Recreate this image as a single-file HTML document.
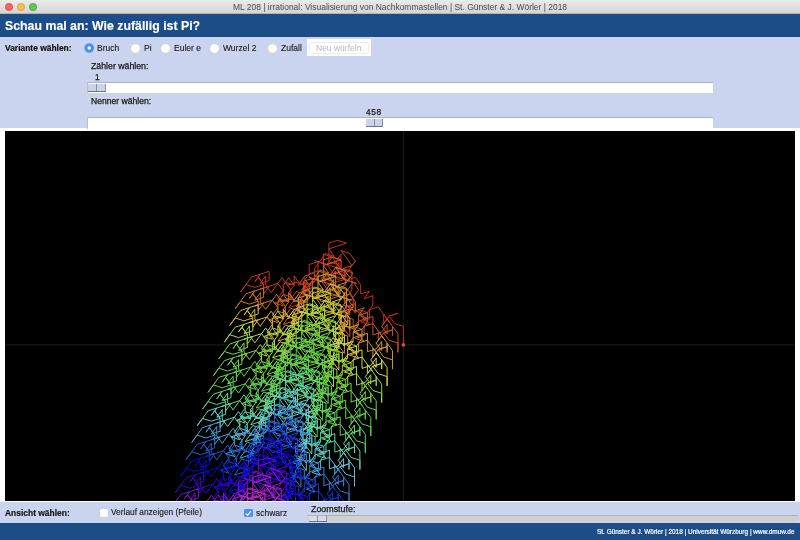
<!DOCTYPE html>
<html><head><meta charset="utf-8"><style>
*{box-sizing:border-box}
html,body{margin:0;padding:0;width:800px;height:540px;overflow:hidden;background:#cad4ee;font-family:"Liberation Sans",sans-serif}
.a{position:absolute;white-space:nowrap;will-change:transform}
#tb{left:0;top:0;width:800px;height:13.5px;background:linear-gradient(#ebebeb,#d5d5d5);border-bottom:0.5px solid #b5b5b5}
.tl{position:absolute;top:3px;width:7.5px;height:7.5px;border-radius:50%}
#hd{left:0;top:13.5px;width:800px;height:23.6px;background:#1c4d86}
#pn{left:0;top:37.1px;width:800px;height:91px;background:#cad4ee}
.t{color:#141414;font-size:8.5px;-webkit-text-stroke:0.1px #141414}
.b{font-weight:bold}
.radio{position:absolute;width:9.5px;height:9.5px;border-radius:50%;background:#fff;box-shadow:0 0 0 0.5px #b8bcc8}
.track{position:absolute;background:#fff;border-top:1px solid #a9b1c4;border-left:1px solid #b9c0d0}
.thumb{position:absolute;background:#cad4ee;border-right:1px solid #8a8f9a;border-bottom:1px solid #6f747e}
.thumb i{position:absolute;left:50%;top:0;bottom:0;width:1px;background:#8a8f9a}
#fr{left:0;top:128px;width:800px;height:374.2px;background:#fff}
#pl{left:5px;top:130.5px;width:790px;height:369.7px;background:#000;overflow:hidden}
#bt{left:0;top:502.2px;width:800px;height:21.1px;background:#cad4ee}
#ft{left:0;top:523.3px;width:800px;height:16.7px;background:#1c4d86}
</style></head><body>
<div class="a" id="tb">
 <div class="tl" style="left:5px;background:#f2665e;border:0.5px solid #dd5048"></div>
 <div class="tl" style="left:17.2px;background:#f6be50;border:0.5px solid #dba33a"></div>
 <div class="tl" style="left:29.4px;background:#5ec656;border:0.5px solid #47ad3e"></div>
 <div class="a" style="left:233px;top:2.2px;font-size:8.46px;color:#4a4a4a">ML 208 | irrational: Visualisierung von Nachkommastellen | St. Günster &amp; J. Wörler | 2018</div>
</div>
<div class="a" id="hd"><div class="a b" style="left:5.3px;top:4.9px;font-size:12.33px;color:#fff;-webkit-text-stroke:0.15px #fff">Schau mal an: Wie zufällig ist Pi?</div></div>
<div class="a" id="pn"></div>
<div class="a t b" style="left:5px;top:42.6px;font-size:8.45px;-webkit-text-stroke:0.2px #141414">Variante wählen:</div>
<svg class="a" style="left:84px;top:43px" width="11" height="11"><circle cx="5.2" cy="5" r="4.8" fill="#4b92ee"/><circle cx="5.2" cy="5" r="1.7" fill="#fff"/></svg>
<div class="a t" style="left:97.4px;top:43px">Bruch</div>
<svg class="a" style="left:130.0px;top:42.5px" width="11" height="11"><circle cx="5.5" cy="5.5" r="4.75" fill="#fff" stroke="#c3c8d4" stroke-width="0.5"/></svg>
<div class="a t" style="left:144px;top:43px">Pi</div>
<svg class="a" style="left:160.0px;top:42.5px" width="11" height="11"><circle cx="5.5" cy="5.5" r="4.75" fill="#fff" stroke="#c3c8d4" stroke-width="0.5"/></svg>
<div class="a t" style="left:173.7px;top:43px">Euler e</div>
<svg class="a" style="left:209.1px;top:42.5px" width="11" height="11"><circle cx="5.5" cy="5.5" r="4.75" fill="#fff" stroke="#c3c8d4" stroke-width="0.5"/></svg>
<div class="a t" style="left:222.8px;top:43px">Wurzel 2</div>
<svg class="a" style="left:266.5px;top:42.5px" width="11" height="11"><circle cx="5.5" cy="5.5" r="4.75" fill="#fff" stroke="#c3c8d4" stroke-width="0.5"/></svg>
<div class="a t" style="left:280.6px;top:43px">Zufall</div>
<div class="a" style="left:307px;top:39.2px;width:64px;height:16.6px;background:#fff"></div>
<div class="a" style="left:308.8px;top:42.1px;width:60.4px;height:12.3px;border:0.5px solid #ededed;border-radius:2px"></div>
<div class="a" style="left:315.8px;top:43.4px;font-size:8.5px;color:#b9b9b9">Neu würfeln</div>

<div class="a t" style="left:90.8px;top:61.2px;font-size:8.75px;-webkit-text-stroke:0.25px #141414">Zähler wählen:</div>
<div class="a t" style="left:94.6px;top:71.8px;font-size:8.4px;-webkit-text-stroke:0.25px #1a1a1a">1</div>
<div class="track" style="left:86.7px;top:82.3px;width:626.5px;height:10.5px"></div>
<div class="thumb" style="left:88.3px;top:83.6px;width:17.4px;height:8.4px"><i></i></div>

<div class="a t" style="left:90.8px;top:96.2px;font-size:8.6px;-webkit-text-stroke:0.25px #141414">Nenner wählen:</div>
<div class="a t" style="left:366.1px;top:106.6px;font-size:8.4px;letter-spacing:0.6px;-webkit-text-stroke:0.25px #1a1a1a">458</div>

<div class="a" id="fr"></div>
<div class="track" style="left:86.7px;top:117.3px;width:626.5px;height:11.5px"></div>
<div class="thumb" style="left:366.1px;top:119.3px;width:16.8px;height:7.5px"><i></i></div>
<div class="a" id="pl">
<svg width="790" height="370" style="position:absolute;left:0;top:0">
<line x1="398.4" y1="0" x2="398.4" y2="370" stroke="#19191c" stroke-width="1.2"/>
<line x1="0" y1="213.9" x2="790" y2="213.9" stroke="#19191c" stroke-width="1.2"/>
<g fill="none" stroke-width="1.0" stroke-linejoin="round" stroke-linecap="round"><path d="M398.4 213.9 398.4 204.6 398.4 195.4 389.6 192.5 384.2 185.1 393.0 182.2 384.2 185.1 378.7 192.5 378.7 183.3 384.2 190.8 378.7 183.3" stroke="#c42b1d"/><path d="M378.7 183.3 373.3 175.8 364.5 178.7 364.5 187.9 355.7 190.8 364.5 193.6 359.1 186.2 353.6 178.7 362.4 181.5 367.9 174.0 367.9 164.8" stroke="#c42c1d"/><path d="M367.9 164.8 359.1 167.7 364.5 160.2 355.7 163.0 355.7 153.8 350.3 146.3 341.5 149.2 336.0 141.7 336.0 132.4 336.0 123.2 330.6 130.7" stroke="#c42c1d"/><path d="M330.6 130.7 321.8 133.5 327.2 141.0 332.7 148.5 341.5 145.6 336.0 138.1 327.2 135.3 318.4 132.4 309.6 129.6 318.4 132.4 318.4 123.2" stroke="#c42d1e"/><path d="M318.4 123.2 327.2 126.0 321.8 133.5 313.0 130.7 304.2 133.5 304.2 142.8 313.0 139.9 313.0 130.7 321.8 133.5 330.6 130.7 336.0 138.1" stroke="#c42e1e"/><path d="M336.0 138.1 336.0 128.9 327.2 126.0 332.7 133.5 323.9 130.7 323.9 121.4 323.9 112.2 332.7 109.3 341.5 112.2 332.7 115.0 323.9 117.9" stroke="#c42f1e"/><path d="M323.9 117.9 329.3 125.4 320.5 122.5 315.1 130.0 309.6 137.5 309.6 146.7 304.2 154.2 298.8 146.7 293.3 154.2 302.1 151.3 296.7 158.8" stroke="#c4301e"/><path d="M296.7 158.8 305.5 161.7 300.0 154.2 305.5 161.7 300.0 154.2 300.0 163.4 308.8 166.3 300.0 163.4 300.0 154.2 300.0 163.4 291.2 160.6" stroke="#c4321e"/><path d="M291.2 160.6 285.8 168.1 285.8 158.8 280.4 151.3 289.2 154.2 283.7 161.7 289.2 169.2 298.0 172.0 289.2 169.2 283.7 176.6 292.5 173.8" stroke="#c4331e"/><path d="M292.5 173.8 298.0 166.3 298.0 157.1 306.8 154.2 298.0 151.3 303.4 143.9 308.8 151.3 314.3 143.9 308.8 151.3 300.0 154.2 291.2 151.3" stroke="#c4351e"/><path d="M291.2 151.3 282.4 154.2 277.0 146.7 271.6 154.2 266.1 161.7 260.7 154.2 260.7 144.9 255.3 152.4 264.1 149.6 264.1 140.3 255.3 143.2" stroke="#c4371f"/><path d="M255.3 143.2 249.8 150.7 255.3 143.2 246.5 146.0 241.0 153.5 235.6 161.0 241.0 153.5 249.8 156.4 258.6 153.5 253.2 146.0 258.6 153.5" stroke="#c5381f"/><path d="M258.6 153.5 258.6 162.8 264.1 155.3 255.3 158.1 264.1 155.3 272.9 152.4 278.3 159.9 272.9 167.4 278.3 174.9 269.5 172.0 278.3 169.2" stroke="#c53a1f"/><path d="M278.3 169.2 287.1 166.3 278.3 163.4 278.3 154.2 283.7 146.7 289.2 154.2 289.2 144.9 294.6 152.4 300.0 144.9 308.8 142.1 314.3 149.6" stroke="#c53d20"/><path d="M314.3 149.6 323.1 146.7 328.5 139.2 333.9 131.7 333.9 141.0 339.4 148.5 330.6 151.3 321.8 154.2 316.4 146.7 325.2 143.9 333.9 146.7" stroke="#c53f20"/><path d="M333.9 146.7 342.7 149.6 351.5 152.4 342.7 149.6 348.2 142.1 339.4 139.2 339.4 148.5 348.2 151.3 353.6 158.8 348.2 166.3 342.7 158.8" stroke="#c54120"/><path d="M342.7 158.8 348.2 151.3 339.4 148.5 333.9 141.0 325.2 143.9 330.6 136.4 339.4 139.2 330.6 142.1 339.4 144.9 344.8 137.5 350.3 130.0" stroke="#c54321"/><path d="M350.3 130.0 344.8 122.5 336.0 119.6 341.5 127.1 346.9 134.6 338.1 137.5 346.9 140.3 346.9 149.6 346.9 158.8 341.5 166.3 341.5 175.6" stroke="#c54621"/><path d="M341.5 175.6 350.3 172.7 350.3 181.9 344.8 174.5 344.8 183.7 336.0 180.9 344.8 178.0 336.0 180.9 344.8 178.0 339.4 185.5 330.6 182.6" stroke="#c54821"/><path d="M330.6 182.6 339.4 185.5 344.8 178.0 339.4 185.5 348.2 188.3 348.2 197.6 353.6 190.1 362.4 187.2 353.6 184.4 353.6 193.6 344.8 196.5" stroke="#c54a22"/><path d="M344.8 196.5 336.0 193.6 344.8 196.5 344.8 205.7 339.4 198.3 339.4 189.0 344.8 181.5 339.4 174.0 348.2 176.9 348.2 167.7 339.4 170.5" stroke="#c54d22"/><path d="M339.4 170.5 339.4 161.3 339.4 170.5 344.8 178.0 353.6 180.9 359.1 188.3 367.9 185.5 367.9 194.7 367.9 204.0 376.7 201.1 382.1 193.6" stroke="#c65023"/><path d="M382.1 193.6 382.1 202.9 376.7 195.4 382.1 187.9 387.5 195.4 387.5 204.7 387.5 195.4 393.0 202.9 393.0 212.1 393.0 221.4 393.0 212.1" stroke="#c65223"/><path d="M393.0 212.1 384.2 209.3 378.7 201.8 387.5 198.9 378.7 201.8 373.3 209.3 373.3 200.0 378.7 207.5 373.3 200.0 367.9 192.5 359.1 195.4" stroke="#c65524"/><path d="M359.1 195.4 359.1 204.7 350.3 207.5 359.1 210.4 353.6 202.9 348.2 195.4 357.0 198.3 362.4 190.8 362.4 181.5 353.6 184.4 359.1 176.9" stroke="#c65824"/><path d="M359.1 176.9 350.3 179.8 350.3 170.5 344.8 163.0 336.0 165.9 330.6 158.4 330.6 149.2 330.6 139.9 325.2 147.4 316.4 150.2 321.8 157.7" stroke="#c65a25"/><path d="M321.8 157.7 327.2 165.2 336.0 162.4 330.6 154.9 321.8 152.0 313.0 149.2 304.2 146.3 313.0 149.2 313.0 139.9 321.8 142.8 316.4 150.2" stroke="#c65d26"/><path d="M316.4 150.2 307.6 147.4 298.8 150.2 298.8 159.5 307.6 156.6 307.6 147.4 316.4 150.2 325.2 147.4 330.6 154.9 330.6 145.6 321.8 142.8" stroke="#c76026"/><path d="M321.8 142.8 327.2 150.2 318.4 147.4 318.4 138.1 318.4 128.9 327.2 126.0 336.0 128.9 327.2 131.7 318.4 134.6 323.9 142.1 315.1 139.2" stroke="#c76327"/><path d="M315.1 139.2 309.6 146.7 304.2 154.2 304.2 163.4 298.8 170.9 293.3 163.4 287.9 170.9 296.7 168.1 291.2 175.6 300.0 178.4 294.6 170.9" stroke="#c76527"/><path d="M294.6 170.9 300.0 178.4 294.6 170.9 294.6 180.2 303.4 183.0 294.6 180.2 294.6 170.9 294.6 180.2 285.8 177.3 280.4 184.8 280.4 175.6" stroke="#c76828"/><path d="M280.4 175.6 274.9 168.1 283.7 170.9 278.3 178.4 283.7 185.9 292.5 188.8 283.7 185.9 278.3 193.4 287.1 190.5 292.5 183.0 292.5 173.8" stroke="#c86b29"/><path d="M292.5 173.8 301.3 170.9 292.5 168.1 298.0 160.6 303.4 168.1 308.8 160.6 303.4 168.1 294.6 170.9 285.8 168.1 277.0 170.9 271.6 163.4" stroke="#c86e29"/><path d="M271.6 163.4 266.1 170.9 260.7 178.4 255.3 170.9 255.3 161.7 249.8 169.2 258.6 166.3 258.6 157.1 249.8 159.9 244.4 167.4 249.8 159.9" stroke="#c8712a"/><path d="M249.8 159.9 241.0 162.8 235.6 170.3 230.2 177.7 235.6 170.3 244.4 173.1 253.2 170.3 247.8 162.8 253.2 170.3 253.2 179.5 258.6 172.0" stroke="#c8742b"/><path d="M258.6 172.0 249.8 174.9 258.6 172.0 267.4 169.2 272.9 176.6 267.4 184.1 272.9 191.6 264.1 188.8 272.9 185.9 281.7 183.0 272.9 180.2" stroke="#c9772c"/><path d="M272.9 180.2 272.9 170.9 278.3 163.4 283.7 170.9 283.7 161.7 289.2 169.2 294.6 161.7 303.4 158.8 308.8 166.3 317.6 163.4 323.1 156.0" stroke="#c97a2c"/><path d="M323.1 156.0 328.5 148.5 328.5 157.7 333.9 165.2 325.2 168.1 316.4 170.9 310.9 163.4 319.7 160.6 328.5 163.4 337.3 166.3 346.1 169.2" stroke="#c97d2d"/><path d="M346.1 169.2 337.3 166.3 342.7 158.8 333.9 156.0 333.9 165.2 342.7 168.1 348.2 175.6 342.7 183.0 337.3 175.6 342.7 168.1 333.9 165.2" stroke="#c9802e"/><path d="M333.9 165.2 328.5 157.7 319.7 160.6 325.2 153.1 333.9 156.0 325.2 158.8 333.9 161.7 339.4 154.2 344.8 146.7 339.4 139.2 330.6 136.4" stroke="#ca832f"/><path d="M330.6 136.4 336.0 143.9 341.5 151.3 332.7 154.2 341.5 157.1 341.5 166.3 341.5 175.6 336.0 183.0 336.0 192.3 344.8 189.4 344.8 198.7" stroke="#ca862f"/><path d="M344.8 198.7 339.4 191.2 339.4 200.4 330.6 197.6 339.4 194.7 330.6 197.6 339.4 194.7 333.9 202.2 325.2 199.4 333.9 202.2 339.4 194.7" stroke="#ca8930"/><path d="M339.4 194.7 333.9 202.2 342.7 205.1 342.7 214.3 348.2 206.8 357.0 204.0 348.2 201.1 348.2 210.4 339.4 213.2 330.6 210.4 339.4 213.2" stroke="#cb8c31"/><path d="M339.4 213.2 339.4 222.5 333.9 215.0 333.9 205.7 339.4 198.3 333.9 190.8 342.7 193.6 342.7 184.4 333.9 187.2 333.9 178.0 333.9 187.2" stroke="#cb8f32"/><path d="M333.9 187.2 339.4 194.7 348.2 197.6 353.6 205.1 362.4 202.2 362.4 211.5 362.4 220.7 371.2 217.9 376.7 210.4 376.7 219.6 371.2 212.1" stroke="#cb9233"/><path d="M371.2 212.1 376.7 204.7 382.1 212.1 382.1 221.4 382.1 212.1 387.5 219.6 387.5 228.9 387.5 238.1 387.5 228.9 378.7 226.0 373.3 218.5" stroke="#cc9533"/><path d="M373.3 218.5 382.1 215.7 373.3 218.5 367.9 226.0 367.9 216.8 373.3 224.2 367.9 216.8 362.4 209.3 353.6 212.1 353.6 221.4 344.8 224.2" stroke="#cc9834"/><path d="M344.8 224.2 353.6 227.1 348.2 219.6 342.7 212.1 351.5 215.0 357.0 207.5 357.0 198.3 348.2 201.1 353.6 193.6 344.8 196.5 344.8 187.2" stroke="#cd9b35"/><path d="M344.8 187.2 339.4 179.8 330.6 182.6 325.2 175.1 325.2 165.9 325.2 156.6 319.7 164.1 310.9 167.0 316.4 174.5 321.8 181.9 330.6 179.1" stroke="#cd9e36"/><path d="M330.6 179.1 325.2 171.6 316.4 168.7 307.6 165.9 298.8 163.0 307.6 165.9 307.6 156.6 316.4 159.5 310.9 167.0 302.1 164.1 293.3 167.0" stroke="#cda137"/><path d="M293.3 167.0 293.3 176.2 302.1 173.4 302.1 164.1 310.9 167.0 319.7 164.1 325.2 171.6 325.2 162.4 316.4 159.5 321.8 167.0 313.0 164.1" stroke="#cea438"/><path d="M313.0 164.1 313.0 154.9 313.0 145.6 321.8 142.8 330.6 145.6 321.8 148.5 313.0 151.3 318.4 158.8 309.6 156.0 304.2 163.4 298.8 170.9" stroke="#cea738"/><path d="M298.8 170.9 298.8 180.2 293.3 187.7 287.9 180.2 282.4 187.7 291.2 184.8 285.8 192.3 294.6 195.1 289.2 187.7 294.6 195.1 289.2 187.7" stroke="#cfaa39"/><path d="M289.2 187.7 289.2 196.9 298.0 199.8 289.2 196.9 289.2 187.7 289.2 196.9 280.4 194.1 274.9 201.5 274.9 192.3 269.5 184.8 278.3 187.7" stroke="#cfad3a"/><path d="M278.3 187.7 272.9 195.1 278.3 202.6 287.1 205.5 278.3 202.6 272.9 210.1 281.7 207.3 287.1 199.8 287.1 190.5 295.9 187.7 287.1 184.8" stroke="#cfb03b"/><path d="M287.1 184.8 292.5 177.3 298.0 184.8 303.4 177.3 298.0 184.8 289.2 187.7 280.4 184.8 271.6 187.7 266.1 180.2 260.7 187.7 255.3 195.1" stroke="#d0b33c"/><path d="M255.3 195.1 249.8 187.7 249.8 178.4 244.4 185.9 253.2 183.0 253.2 173.8 244.4 176.6 239.0 184.1 244.4 176.6 235.6 179.5 230.2 187.0" stroke="#d0b63d"/><path d="M230.2 187.0 224.7 194.5 230.2 187.0 239.0 189.8 247.8 187.0 242.3 179.5 247.8 187.0 247.8 196.2 253.2 188.8 244.4 191.6 253.2 188.8" stroke="#d1b93e"/><path d="M253.2 188.8 262.0 185.9 267.4 193.4 262.0 200.9 267.4 208.3 258.6 205.5 267.4 202.6 276.2 199.8 267.4 196.9 267.4 187.7 272.9 180.2" stroke="#d1bc3f"/><path d="M272.9 180.2 278.3 187.7 278.3 178.4 283.7 185.9 289.2 178.4 298.0 175.6 303.4 183.0 312.2 180.2 317.6 172.7 323.1 165.2 323.1 174.5" stroke="#d2c040"/><path d="M323.1 174.5 328.5 181.9 319.7 184.8 310.9 187.7 305.5 180.2 314.3 177.3 323.1 180.2 331.9 183.0 340.7 185.9 331.9 183.0 337.3 175.6" stroke="#d2c341"/><path d="M337.3 175.6 328.5 172.7 328.5 181.9 337.3 184.8 342.7 192.3 337.3 199.8 331.9 192.3 337.3 184.8 328.5 181.9 323.1 174.5 314.3 177.3" stroke="#d3c642"/><path d="M314.3 177.3 319.7 169.8 328.5 172.7 319.7 175.6 328.5 178.4 333.9 170.9 339.4 163.4 333.9 156.0 325.2 153.1 330.6 160.6 336.0 168.1" stroke="#d3c942"/><path d="M336.0 168.1 327.2 170.9 336.0 173.8 336.0 183.0 336.0 192.3 330.6 199.8 330.6 209.0 339.4 206.2 339.4 215.4 333.9 207.9 333.9 217.2" stroke="#d4cc43"/><path d="M333.9 217.2 325.2 214.3 333.9 211.5 325.2 214.3 333.9 211.5 328.5 218.9 319.7 216.1 328.5 218.9 333.9 211.5 328.5 218.9 337.3 221.8" stroke="#d4cf44"/><path d="M337.3 221.8 337.3 231.1 342.7 223.6 351.5 220.7 342.7 217.9 342.7 227.1 333.9 230.0 325.2 227.1 333.9 230.0 333.9 239.2 328.5 231.7" stroke="#d5d245"/><path d="M328.5 231.7 328.5 222.5 333.9 215.0 328.5 207.5 337.3 210.4 337.3 201.1 328.5 204.0 328.5 194.7 328.5 204.0 333.9 211.5 342.7 214.3" stroke="#d6d546"/><path d="M342.7 214.3 348.2 221.8 357.0 218.9 357.0 228.2 357.0 237.4 365.8 234.6 371.2 227.1 371.2 236.4 365.8 228.9 371.2 221.4 376.7 228.9" stroke="#d3d646"/><path d="M376.7 228.9 376.7 238.1 376.7 228.9 382.1 236.4 382.1 245.6 382.1 254.9 382.1 245.6 373.3 242.7 367.9 235.3 376.7 232.4 367.9 235.3" stroke="#d1d646"/><path d="M367.9 235.3 362.4 242.7 362.4 233.5 367.9 241.0 362.4 233.5 357.0 226.0 348.2 228.9 348.2 238.1 339.4 241.0 348.2 243.8 342.7 236.4" stroke="#ced546"/><path d="M342.7 236.4 337.3 228.9 346.1 231.7 351.5 224.2 351.5 215.0 342.7 217.9 348.2 210.4 339.4 213.2 339.4 204.0 333.9 196.5 325.2 199.4" stroke="#ccd546"/><path d="M325.2 199.4 319.7 191.9 319.7 182.6 319.7 173.4 314.3 180.9 305.5 183.7 310.9 191.2 316.4 198.7 325.2 195.8 319.7 188.3 310.9 185.5" stroke="#c9d545"/><path d="M310.9 185.5 302.1 182.6 293.3 179.8 302.1 182.6 302.1 173.4 310.9 176.2 305.5 183.7 296.7 180.9 287.9 183.7 287.9 193.0 296.7 190.1" stroke="#c6d545"/><path d="M296.7 190.1 296.7 180.9 305.5 183.7 314.3 180.9 319.7 188.3 319.7 179.1 310.9 176.2 316.4 183.7 307.6 180.9 307.6 171.6 307.6 162.4" stroke="#c4d545"/><path d="M307.6 162.4 316.4 159.5 325.2 162.4 316.4 165.2 307.6 168.1 313.0 175.6 304.2 172.7 298.8 180.2 293.3 187.7 293.3 196.9 287.9 204.4" stroke="#c1d545"/><path d="M287.9 204.4 282.4 196.9 277.0 204.4 285.8 201.5 280.4 209.0 289.2 211.9 283.7 204.4 289.2 211.9 283.7 204.4 283.7 213.6 292.5 216.5" stroke="#bfd545"/><path d="M292.5 216.5 283.7 213.6 283.7 204.4 283.7 213.6 274.9 210.8 269.5 218.3 269.5 209.0 264.1 201.5 272.9 204.4 267.4 211.9 272.9 219.4" stroke="#bcd544"/><path d="M272.9 219.4 281.7 222.2 272.9 219.4 267.4 226.8 276.2 224.0 281.7 216.5 281.7 207.3 290.5 204.4 281.7 201.5 287.1 194.1 292.5 201.5" stroke="#bad544"/><path d="M292.5 201.5 298.0 194.1 292.5 201.5 283.7 204.4 274.9 201.5 266.1 204.4 260.7 196.9 255.3 204.4 249.8 211.9 244.4 204.4 244.4 195.1" stroke="#b7d544"/><path d="M244.4 195.1 239.0 202.6 247.8 199.8 247.8 190.5 239.0 193.4 233.5 200.9 239.0 193.4 230.2 196.2 224.7 203.7 219.3 211.2 224.7 203.7" stroke="#b5d544"/><path d="M224.7 203.7 233.5 206.6 242.3 203.7 236.9 196.2 242.3 203.7 242.3 213.0 247.8 205.5 239.0 208.3 247.8 205.5 256.5 202.6 262.0 210.1" stroke="#b2d444"/><path d="M262.0 210.1 256.5 217.6 262.0 225.1 253.2 222.2 262.0 219.4 270.8 216.5 262.0 213.6 262.0 204.4 267.4 196.9 272.9 204.4 272.9 195.1" stroke="#b0d443"/><path d="M272.9 195.1 278.3 202.6 283.7 195.1 292.5 192.3 298.0 199.8 306.8 196.9 312.2 189.4 317.6 181.9 317.6 191.2 323.1 198.7 314.3 201.5" stroke="#add443"/><path d="M314.3 201.5 305.5 204.4 300.0 196.9 308.8 194.1 317.6 196.9 326.4 199.8 335.2 202.6 326.4 199.8 331.9 192.3 323.1 189.4 323.1 198.7" stroke="#abd443"/><path d="M323.1 198.7 331.9 201.5 337.3 209.0 331.9 216.5 326.4 209.0 331.9 201.5 323.1 198.7 317.6 191.2 308.8 194.1 314.3 186.6 323.1 189.4" stroke="#a8d443"/><path d="M323.1 189.4 314.3 192.3 323.1 195.1 328.5 187.7 333.9 180.2 328.5 172.7 319.7 169.8 325.2 177.3 330.6 184.8 321.8 187.7 330.6 190.5" stroke="#a6d443"/><path d="M330.6 190.5 330.6 199.8 330.6 209.0 325.2 216.5 325.2 225.8 333.9 222.9 333.9 232.1 328.5 224.7 328.5 233.9 319.7 231.1 328.5 228.2" stroke="#a4d443"/><path d="M328.5 228.2 319.7 231.1 328.5 228.2 323.1 235.7 314.3 232.8 323.1 235.7 328.5 228.2 323.1 235.7 331.9 238.5 331.9 247.8 337.3 240.3" stroke="#a1d443"/><path d="M337.3 240.3 346.1 237.4 337.3 234.6 337.3 243.8 328.5 246.7 319.7 243.8 328.5 246.7 328.5 255.9 323.1 248.5 323.1 239.2 328.5 231.7" stroke="#9fd442"/><path d="M328.5 231.7 323.1 224.2 331.9 227.1 331.9 217.9 323.1 220.7 323.1 211.5 323.1 220.7 328.5 228.2 337.3 231.1 342.7 238.5 351.5 235.7" stroke="#9dd442"/><path d="M351.5 235.7 351.5 244.9 351.5 254.2 360.3 251.3 365.8 243.8 365.8 253.1 360.3 245.6 365.8 238.1 371.2 245.6 371.2 254.9 371.2 245.6" stroke="#9ad442"/><path d="M371.2 245.6 376.7 253.1 376.7 262.3 376.7 271.6 376.7 262.3 367.9 259.5 362.4 252.0 371.2 249.1 362.4 252.0 357.0 259.5 357.0 250.2" stroke="#98d442"/><path d="M357.0 250.2 362.4 257.7 357.0 250.2 351.5 242.7 342.7 245.6 342.7 254.9 333.9 257.7 342.7 260.6 337.3 253.1 331.9 245.6 340.7 248.5" stroke="#96d442"/><path d="M340.7 248.5 346.1 241.0 346.1 231.7 337.3 234.6 342.7 227.1 333.9 230.0 333.9 220.7 328.5 213.2 319.7 216.1 314.3 208.6 314.3 199.4" stroke="#94d442"/><path d="M314.3 199.4 314.3 190.1 308.8 197.6 300.0 200.4 305.5 207.9 310.9 215.4 319.7 212.6 314.3 205.1 305.5 202.2 296.7 199.4 287.9 196.5" stroke="#92d442"/><path d="M287.9 196.5 296.7 199.4 296.7 190.1 305.5 193.0 300.0 200.4 291.2 197.6 282.4 200.4 282.4 209.7 291.2 206.8 291.2 197.6 300.0 200.4" stroke="#8fd341"/><path d="M300.0 200.4 308.8 197.6 314.3 205.1 314.3 195.8 305.5 193.0 310.9 200.4 302.1 197.6 302.1 188.3 302.1 179.1 310.9 176.2 319.7 179.1" stroke="#8dd341"/><path d="M319.7 179.1 310.9 181.9 302.1 184.8 307.6 192.3 298.8 189.4 293.3 196.9 287.9 204.4 287.9 213.6 282.4 221.1 277.0 213.6 271.6 221.1" stroke="#8bd341"/><path d="M271.6 221.1 280.4 218.3 274.9 225.8 283.7 228.6 278.3 221.1 283.7 228.6 278.3 221.1 278.3 230.4 287.1 233.2 278.3 230.4 278.3 221.1" stroke="#89d341"/><path d="M278.3 221.1 278.3 230.4 269.5 227.5 264.1 235.0 264.1 225.8 258.6 218.3 267.4 221.1 262.0 228.6 267.4 236.1 276.2 239.0 267.4 236.1" stroke="#87d341"/><path d="M267.4 236.1 262.0 243.6 270.8 240.7 276.2 233.2 276.2 224.0 285.0 221.1 276.2 218.3 281.7 210.8 287.1 218.3 292.5 210.8 287.1 218.3" stroke="#85d341"/><path d="M287.1 218.3 278.3 221.1 269.5 218.3 260.7 221.1 255.3 213.6 249.8 221.1 244.4 228.6 239.0 221.1 239.0 211.9 233.5 219.4 242.3 216.5" stroke="#83d341"/><path d="M242.3 216.5 242.3 207.3 233.5 210.1 228.1 217.6 233.5 210.1 224.7 213.0 219.3 220.5 213.8 227.9 219.3 220.5 228.1 223.3 236.9 220.5" stroke="#81d341"/><path d="M236.9 220.5 231.4 213.0 236.9 220.5 236.9 229.7 242.3 222.2 233.5 225.1 242.3 222.2 251.1 219.4 256.5 226.8 251.1 234.3 256.5 241.8" stroke="#80d341"/><path d="M256.5 241.8 247.8 239.0 256.5 236.1 265.3 233.2 256.5 230.4 256.5 221.1 262.0 213.6 267.4 221.1 267.4 211.9 272.9 219.4 278.3 211.9" stroke="#7ed341"/><path d="M278.3 211.9 287.1 209.0 292.5 216.5 301.3 213.6 306.8 206.2 312.2 198.7 312.2 207.9 317.6 215.4 308.8 218.3 300.0 221.1 294.6 213.6" stroke="#7cd340"/><path d="M294.6 213.6 303.4 210.8 312.2 213.6 321.0 216.5 329.8 219.4 321.0 216.5 326.4 209.0 317.6 206.2 317.6 215.4 326.4 218.3 331.9 225.8" stroke="#7ad340"/><path d="M331.9 225.8 326.4 233.2 321.0 225.8 326.4 218.3 317.6 215.4 312.2 207.9 303.4 210.8 308.8 203.3 317.6 206.2 308.8 209.0 317.6 211.9" stroke="#79d340"/><path d="M317.6 211.9 323.1 204.4 328.5 196.9 323.1 189.4 314.3 186.6 319.7 194.1 325.2 201.5 316.4 204.4 325.2 207.3 325.2 216.5 325.2 225.8" stroke="#77d340"/><path d="M325.2 225.8 319.7 233.2 319.7 242.5 328.5 239.6 328.5 248.9 323.1 241.4 323.1 250.6 314.3 247.8 323.1 244.9 314.3 247.8 323.1 244.9" stroke="#75d340"/><path d="M323.1 244.9 317.6 252.4 308.8 249.6 317.6 252.4 323.1 244.9 317.6 252.4 326.4 255.3 326.4 264.5 331.9 257.0 340.7 254.2 331.9 251.3" stroke="#74d340"/><path d="M331.9 251.3 331.9 260.6 323.1 263.4 314.3 260.6 323.1 263.4 323.1 272.7 317.6 265.2 317.6 255.9 323.1 248.5 317.6 241.0 326.4 243.8" stroke="#72d340"/><path d="M326.4 243.8 326.4 234.6 317.6 237.4 317.6 228.2 317.6 237.4 323.1 244.9 331.9 247.8 337.3 255.3 346.1 252.4 346.1 261.7 346.1 270.9" stroke="#71d340"/><path d="M346.1 270.9 354.9 268.1 360.3 260.6 360.3 269.8 354.9 262.3 360.3 254.9 365.8 262.3 365.8 271.6 365.8 262.3 371.2 269.8 371.2 279.1" stroke="#70d340"/><path d="M371.2 279.1 371.2 288.3 371.2 279.1 362.4 276.2 357.0 268.7 365.8 265.9 357.0 268.7 351.5 276.2 351.5 267.0 357.0 274.4 351.5 267.0" stroke="#6ed340"/><path d="M351.5 267.0 346.1 259.5 337.3 262.3 337.3 271.6 328.5 274.4 337.3 277.3 331.9 269.8 326.4 262.3 335.2 265.2 340.7 257.7 340.7 248.5" stroke="#6dd340"/><path d="M340.7 248.5 331.9 251.3 337.3 243.8 328.5 246.7 328.5 237.4 323.1 230.0 314.3 232.8 308.8 225.3 308.8 216.1 308.8 206.8 303.4 214.3" stroke="#6cd340"/><path d="M303.4 214.3 294.6 217.2 300.0 224.7 305.5 232.1 314.3 229.3 308.8 221.8 300.0 218.9 291.2 216.1 282.4 213.2 291.2 216.1 291.2 206.8" stroke="#6bd340"/><path d="M291.2 206.8 300.0 209.7 294.6 217.2 285.8 214.3 277.0 217.2 277.0 226.4 285.8 223.6 285.8 214.3 294.6 217.2 303.4 214.3 308.8 221.8" stroke="#6ad340"/><path d="M308.8 221.8 308.8 212.6 300.0 209.7 305.5 217.2 296.7 214.3 296.7 205.1 296.7 195.8 305.5 193.0 314.3 195.8 305.5 198.7 296.7 201.5" stroke="#69d340"/><path d="M296.7 201.5 302.1 209.0 293.3 206.2 287.9 213.6 282.4 221.1 282.4 230.4 277.0 237.9 271.6 230.4 266.1 237.9 274.9 235.0 269.5 242.5" stroke="#68d340"/><path d="M269.5 242.5 278.3 245.3 272.9 237.9 278.3 245.3 272.9 237.9 272.9 247.1 281.7 250.0 272.9 247.1 272.9 237.9 272.9 247.1 264.1 244.3" stroke="#67d340"/><path d="M264.1 244.3 258.6 251.7 258.6 242.5 253.2 235.0 262.0 237.9 256.5 245.3 262.0 252.8 270.8 255.7 262.0 252.8 256.5 260.3 265.3 257.5" stroke="#66d340"/><path d="M265.3 257.5 270.8 250.0 270.8 240.7 279.6 237.9 270.8 235.0 276.2 227.5 281.7 235.0 287.1 227.5 281.7 235.0 272.9 237.9 264.1 235.0" stroke="#66d340"/><path d="M264.1 235.0 255.3 237.9 249.8 230.4 244.4 237.9 239.0 245.3 233.5 237.9 233.5 228.6 228.1 236.1 236.9 233.2 236.9 224.0 228.1 226.8" stroke="#65d340"/><path d="M228.1 226.8 222.6 234.3 228.1 226.8 219.3 229.7 213.8 237.2 208.4 244.7 213.8 237.2 222.6 240.0 231.4 237.2 226.0 229.7 231.4 237.2" stroke="#64d33f"/><path d="M231.4 237.2 231.4 246.4 236.9 239.0 228.1 241.8 236.9 239.0 245.7 236.1 251.1 243.6 245.7 251.1 251.1 258.5 242.3 255.7 251.1 252.8" stroke="#64d33f"/><path d="M251.1 252.8 259.9 250.0 251.1 247.1 251.1 237.9 256.5 230.4 262.0 237.9 262.0 228.6 267.4 236.1 272.9 228.6 281.7 225.8 287.1 233.2" stroke="#63d33f"/><path d="M287.1 233.2 295.9 230.4 301.3 222.9 306.8 215.4 306.8 224.7 312.2 232.1 303.4 235.0 294.6 237.9 289.2 230.4 298.0 227.5 306.8 230.4" stroke="#63d33f"/><path d="M306.8 230.4 315.6 233.2 324.4 236.1 315.6 233.2 321.0 225.8 312.2 222.9 312.2 232.1 321.0 235.0 326.4 242.5 321.0 250.0 315.6 242.5" stroke="#63d33f"/><path d="M315.6 242.5 321.0 235.0 312.2 232.1 306.8 224.7 298.0 227.5 303.4 220.0 312.2 222.9 303.4 225.8 312.2 228.6 317.6 221.1 323.1 213.6" stroke="#62d33f"/><path d="M323.1 213.6 317.6 206.2 308.8 203.3 314.3 210.8 319.7 218.3 310.9 221.1 319.7 224.0 319.7 233.2 319.7 242.5 314.3 250.0 314.3 259.2" stroke="#62d33f"/><path d="M314.3 259.2 323.1 256.4 323.1 265.6 317.6 258.1 317.6 267.4 308.8 264.5 317.6 261.7 308.8 264.5 317.6 261.7 312.2 269.1 303.4 266.3" stroke="#62d33f"/><path d="M303.4 266.3 312.2 269.1 317.6 261.7 312.2 269.1 321.0 272.0 321.0 281.3 326.4 273.8 335.2 270.9 326.4 268.1 326.4 277.3 317.6 280.2" stroke="#62d33f"/><path d="M317.6 280.2 308.8 277.3 317.6 280.2 317.6 289.4 312.2 281.9 312.2 272.7 317.6 265.2 312.2 257.7 321.0 260.6 321.0 251.3 312.2 254.2" stroke="#62d340"/><path d="M312.2 254.2 312.2 244.9 312.2 254.2 317.6 261.7 326.4 264.5 331.9 272.0 340.7 269.1 340.7 278.4 340.7 287.6 349.5 284.8 354.9 277.3" stroke="#62d340"/><path d="M354.9 277.3 354.9 286.6 349.5 279.1 354.9 271.6 360.3 279.1 360.3 288.3 360.3 279.1 365.8 286.6 365.8 295.8 365.8 305.1 365.8 295.8" stroke="#62d341"/><path d="M365.8 295.8 357.0 292.9 351.5 285.5 360.3 282.6 351.5 285.5 346.1 292.9 346.1 283.7 351.5 291.2 346.1 283.7 340.7 276.2 331.9 279.1" stroke="#62d341"/><path d="M331.9 279.1 331.9 288.3 323.1 291.2 331.9 294.0 326.4 286.6 321.0 279.1 329.8 281.9 335.2 274.4 335.2 265.2 326.4 268.1 331.9 260.6" stroke="#62d342"/><path d="M331.9 260.6 323.1 263.4 323.1 254.2 317.6 246.7 308.8 249.6 303.4 242.1 303.4 232.8 303.4 223.6 298.0 231.1 289.2 233.9 294.6 241.4" stroke="#62d343"/><path d="M294.6 241.4 300.0 248.9 308.8 246.0 303.4 238.5 294.6 235.7 285.8 232.8 277.0 230.0 285.8 232.8 285.8 223.6 294.6 226.4 289.2 233.9" stroke="#62d344"/><path d="M289.2 233.9 280.4 231.1 271.6 233.9 271.6 243.2 280.4 240.3 280.4 231.1 289.2 233.9 298.0 231.1 303.4 238.5 303.4 229.3 294.6 226.4" stroke="#62d345"/><path d="M294.6 226.4 300.0 233.9 291.2 231.1 291.2 221.8 291.2 212.6 300.0 209.7 308.8 212.6 300.0 215.4 291.2 218.3 296.7 225.8 287.9 222.9" stroke="#62d346"/><path d="M287.9 222.9 282.4 230.4 277.0 237.9 277.0 247.1 271.6 254.6 266.1 247.1 260.7 254.6 269.5 251.7 264.1 259.2 272.9 262.1 267.4 254.6" stroke="#62d347"/><path d="M267.4 254.6 272.9 262.1 267.4 254.6 267.4 263.8 276.2 266.7 267.4 263.8 267.4 254.6 267.4 263.8 258.6 261.0 253.2 268.5 253.2 259.2" stroke="#62d348"/><path d="M253.2 259.2 247.8 251.7 256.5 254.6 251.1 262.1 256.5 269.6 265.3 272.4 256.5 269.6 251.1 277.0 259.9 274.2 265.3 266.7 265.3 257.5" stroke="#62d34a"/><path d="M265.3 257.5 274.1 254.6 265.3 251.7 270.8 244.3 276.2 251.7 281.7 244.3 276.2 251.7 267.4 254.6 258.6 251.7 249.8 254.6 244.4 247.1" stroke="#62d34b"/><path d="M244.4 247.1 239.0 254.6 233.5 262.1 228.1 254.6 228.1 245.3 222.6 252.8 231.4 250.0 231.4 240.7 222.6 243.6 217.2 251.1 222.6 243.6" stroke="#62d34d"/><path d="M222.6 243.6 213.8 246.4 208.4 253.9 203.0 261.4 208.4 253.9 217.2 256.8 226.0 253.9 220.6 246.4 226.0 253.9 226.0 263.2 231.4 255.7" stroke="#62d34e"/><path d="M231.4 255.7 222.6 258.5 231.4 255.7 240.2 252.8 245.7 260.3 240.2 267.8 245.7 275.3 236.9 272.4 245.7 269.6 254.5 266.7 245.7 263.8" stroke="#62d350"/><path d="M245.7 263.8 245.7 254.6 251.1 247.1 256.5 254.6 256.5 245.3 262.0 252.8 267.4 245.3 276.2 242.5 281.7 250.0 290.5 247.1 295.9 239.6" stroke="#62d352"/><path d="M295.9 239.6 301.3 232.1 301.3 241.4 306.8 248.9 298.0 251.7 289.2 254.6 283.7 247.1 292.5 244.3 301.3 247.1 310.1 250.0 318.9 252.8" stroke="#62d353"/><path d="M318.9 252.8 310.1 250.0 315.6 242.5 306.8 239.6 306.8 248.9 315.6 251.7 321.0 259.2 315.6 266.7 310.1 259.2 315.6 251.7 306.8 248.9" stroke="#62d355"/><path d="M306.8 248.9 301.3 241.4 292.5 244.3 298.0 236.8 306.8 239.6 298.0 242.5 306.8 245.3 312.2 237.9 317.6 230.4 312.2 222.9 303.4 220.0" stroke="#62d357"/><path d="M303.4 220.0 308.8 227.5 314.3 235.0 305.5 237.9 314.3 240.7 314.3 250.0 314.3 259.2 308.8 266.7 308.8 276.0 317.6 273.1 317.6 282.3" stroke="#62d359"/><path d="M317.6 282.3 312.2 274.9 312.2 284.1 303.4 281.3 312.2 278.4 303.4 281.3 312.2 278.4 306.8 285.9 298.0 283.0 306.8 285.9 312.2 278.4" stroke="#62d35c"/><path d="M312.2 278.4 306.8 285.9 315.6 288.7 315.6 298.0 321.0 290.5 329.8 287.6 321.0 284.8 321.0 294.0 312.2 296.9 303.4 294.0 312.2 296.9" stroke="#62d35e"/><path d="M312.2 296.9 312.2 306.1 306.8 298.7 306.8 289.4 312.2 281.9 306.8 274.4 315.6 277.3 315.6 268.1 306.8 270.9 306.8 261.7 306.8 270.9" stroke="#62d360"/><path d="M306.8 270.9 312.2 278.4 321.0 281.3 326.4 288.7 335.2 285.9 335.2 295.1 335.2 304.4 344.0 301.5 349.5 294.0 349.5 303.3 344.0 295.8" stroke="#62d362"/><path d="M344.0 295.8 349.5 288.3 354.9 295.8 354.9 305.1 354.9 295.8 360.3 303.3 360.3 312.5 360.3 321.8 360.3 312.5 351.5 309.7 346.1 302.2" stroke="#62d365"/><path d="M346.1 302.2 354.9 299.3 346.1 302.2 340.7 309.7 340.7 300.4 346.1 307.9 340.7 300.4 335.2 292.9 326.4 295.8 326.4 305.1 317.6 307.9" stroke="#62d367"/><path d="M317.6 307.9 326.4 310.8 321.0 303.3 315.6 295.8 324.4 298.7 329.8 291.2 329.8 281.9 321.0 284.8 326.4 277.3 317.6 280.2 317.6 270.9" stroke="#62d369"/><path d="M317.6 270.9 312.2 263.4 303.4 266.3 298.0 258.8 298.0 249.6 298.0 240.3 292.5 247.8 283.7 250.6 289.2 258.1 294.6 265.6 303.4 262.8" stroke="#62d36c"/><path d="M303.4 262.8 298.0 255.3 289.2 252.4 280.4 249.6 271.6 246.7 280.4 249.6 280.4 240.3 289.2 243.2 283.7 250.6 274.9 247.8 266.1 250.6" stroke="#62d36e"/><path d="M266.1 250.6 266.1 259.9 274.9 257.0 274.9 247.8 283.7 250.6 292.5 247.8 298.0 255.3 298.0 246.0 289.2 243.2 294.6 250.6 285.8 247.8" stroke="#62d371"/><path d="M285.8 247.8 285.8 238.5 285.8 229.3 294.6 226.4 303.4 229.3 294.6 232.1 285.8 235.0 291.2 242.5 282.4 239.6 277.0 247.1 271.6 254.6" stroke="#62d373"/><path d="M271.6 254.6 271.6 263.8 266.1 271.3 260.7 263.8 255.3 271.3 264.1 268.5 258.6 276.0 267.4 278.8 262.0 271.3 267.4 278.8 262.0 271.3" stroke="#62d376"/><path d="M262.0 271.3 262.0 280.6 270.8 283.4 262.0 280.6 262.0 271.3 262.0 280.6 253.2 277.7 247.8 285.2 247.8 276.0 242.3 268.5 251.1 271.3" stroke="#62d378"/><path d="M251.1 271.3 245.7 278.8 251.1 286.3 259.9 289.2 251.1 286.3 245.7 293.8 254.5 290.9 259.9 283.4 259.9 274.2 268.7 271.3 259.9 268.5" stroke="#62d37b"/><path d="M259.9 268.5 265.3 261.0 270.8 268.5 276.2 261.0 270.8 268.5 262.0 271.3 253.2 268.5 244.4 271.3 239.0 263.8 233.5 271.3 228.1 278.8" stroke="#62d37e"/><path d="M228.1 278.8 222.6 271.3 222.6 262.1 217.2 269.6 226.0 266.7 226.0 257.5 217.2 260.3 211.8 267.8 217.2 260.3 208.4 263.2 203.0 270.7" stroke="#62d380"/><path d="M203.0 270.7 197.5 278.1 203.0 270.7 211.8 273.5 220.6 270.7 215.1 263.2 220.6 270.7 220.6 279.9 226.0 272.4 217.2 275.3 226.0 272.4" stroke="#62d383"/><path d="M226.0 272.4 234.8 269.6 240.2 277.0 234.8 284.5 240.2 292.0 231.4 289.2 240.2 286.3 249.0 283.4 240.2 280.6 240.2 271.3 245.7 263.8" stroke="#62d386"/><path d="M245.7 263.8 251.1 271.3 251.1 262.1 256.5 269.6 262.0 262.1 270.8 259.2 276.2 266.7 285.0 263.8 290.5 256.4 295.9 248.9 295.9 258.1" stroke="#62d388"/><path d="M295.9 258.1 301.3 265.6 292.5 268.5 283.7 271.3 278.3 263.8 287.1 261.0 295.9 263.8 304.7 266.7 313.5 269.6 304.7 266.7 310.1 259.2" stroke="#62d38b"/><path d="M310.1 259.2 301.3 256.4 301.3 265.6 310.1 268.5 315.6 276.0 310.1 283.4 304.7 276.0 310.1 268.5 301.3 265.6 295.9 258.1 287.1 261.0" stroke="#62d38e"/><path d="M287.1 261.0 292.5 253.5 301.3 256.4 292.5 259.2 301.3 262.1 306.8 254.6 312.2 247.1 306.8 239.6 298.0 236.8 303.4 244.3 308.8 251.7" stroke="#62d390"/><path d="M308.8 251.7 300.0 254.6 308.8 257.5 308.8 266.7 308.8 276.0 303.4 283.4 303.4 292.7 312.2 289.8 312.2 299.1 306.8 291.6 306.8 300.8" stroke="#62d393"/><path d="M306.8 300.8 298.0 298.0 306.8 295.1 298.0 298.0 306.8 295.1 301.3 302.6 292.5 299.8 301.3 302.6 306.8 295.1 301.3 302.6 310.1 305.5" stroke="#62d396"/><path d="M310.1 305.5 310.1 314.7 315.6 307.2 324.4 304.4 315.6 301.5 315.6 310.8 306.8 313.6 298.0 310.8 306.8 313.6 306.8 322.9 301.3 315.4" stroke="#62d399"/><path d="M301.3 315.4 301.3 306.1 306.8 298.7 301.3 291.2 310.1 294.0 310.1 284.8 301.3 287.6 301.3 278.4 301.3 287.6 306.8 295.1 315.6 298.0" stroke="#62d39c"/><path d="M315.6 298.0 321.0 305.5 329.8 302.6 329.8 311.9 329.8 321.1 338.6 318.3 344.0 310.8 344.0 320.0 338.6 312.5 344.0 305.1 349.5 312.5" stroke="#62d39e"/><path d="M349.5 312.5 349.5 321.8 349.5 312.5 354.9 320.0 354.9 329.3 354.9 338.5 354.9 329.3 346.1 326.4 340.7 318.9 349.5 316.1 340.7 318.9" stroke="#62d3a1"/><path d="M340.7 318.9 335.2 326.4 335.2 317.2 340.7 324.6 335.2 317.2 329.8 309.7 321.0 312.5 321.0 321.8 312.2 324.6 321.0 327.5 315.6 320.0" stroke="#62d3a4"/><path d="M315.6 320.0 310.1 312.5 318.9 315.4 324.4 307.9 324.4 298.7 315.6 301.5 321.0 294.0 312.2 296.9 312.2 287.6 306.8 280.2 298.0 283.0" stroke="#62d3a7"/><path d="M298.0 283.0 292.5 275.5 292.5 266.3 292.5 257.0 287.1 264.5 278.3 267.4 283.7 274.9 289.2 282.3 298.0 279.5 292.5 272.0 283.7 269.1" stroke="#62d3aa"/><path d="M283.7 269.1 274.9 266.3 266.1 263.4 274.9 266.3 274.9 257.0 283.7 259.9 278.3 267.4 269.5 264.5 260.7 267.4 260.7 276.6 269.5 273.8" stroke="#62d3ad"/><path d="M269.5 273.8 269.5 264.5 278.3 267.4 287.1 264.5 292.5 272.0 292.5 262.8 283.7 259.9 289.2 267.4 280.4 264.5 280.4 255.3 280.4 246.0" stroke="#62d3b0"/><path d="M280.4 246.0 289.2 243.2 298.0 246.0 289.2 248.9 280.4 251.7 285.8 259.2 277.0 256.4 271.6 263.8 266.1 271.3 266.1 280.6 260.7 288.1" stroke="#62d3b2"/><path d="M260.7 288.1 255.3 280.6 249.8 288.1 258.6 285.2 253.2 292.7 262.0 295.5 256.5 288.1 262.0 295.5 256.5 288.1 256.5 297.3 265.3 300.2" stroke="#62d3b5"/><path d="M265.3 300.2 256.5 297.3 256.5 288.1 256.5 297.3 247.8 294.5 242.3 301.9 242.3 292.7 236.9 285.2 245.7 288.1 240.2 295.5 245.7 303.0" stroke="#62d3b8"/><path d="M245.7 303.0 254.5 305.9 245.7 303.0 240.2 310.5 249.0 307.7 254.5 300.2 254.5 290.9 263.3 288.1 254.5 285.2 259.9 277.7 265.3 285.2" stroke="#62d3bb"/><path d="M265.3 285.2 270.8 277.7 265.3 285.2 256.5 288.1 247.8 285.2 239.0 288.1 233.5 280.6 228.1 288.1 222.6 295.5 217.2 288.1 217.2 278.8" stroke="#62d3be"/><path d="M217.2 278.8 211.8 286.3 220.6 283.4 220.6 274.2 211.8 277.0 206.3 284.5 211.8 277.0 203.0 279.9 197.5 287.4 192.1 294.9 197.5 287.4" stroke="#62d3c1"/><path d="M197.5 287.4 206.3 290.2 215.1 287.4 209.7 279.9 215.1 287.4 215.1 296.6 220.6 289.2 211.8 292.0 220.6 289.2 229.4 286.3 234.8 293.8" stroke="#62d3c4"/><path d="M234.8 293.8 229.4 301.3 234.8 308.7 226.0 305.9 234.8 303.0 243.6 300.2 234.8 297.3 234.8 288.1 240.2 280.6 245.7 288.1 245.7 278.8" stroke="#62d3c7"/><path d="M245.7 278.8 251.1 286.3 256.5 278.8 265.3 276.0 270.8 283.4 279.6 280.6 285.0 273.1 290.5 265.6 290.5 274.9 295.9 282.3 287.1 285.2" stroke="#62d3ca"/><path d="M287.1 285.2 278.3 288.1 272.9 280.6 281.7 277.7 290.5 280.6 299.3 283.4 308.0 286.3 299.3 283.4 304.7 276.0 295.9 273.1 295.9 282.3" stroke="#62d3cd"/><path d="M295.9 282.3 304.7 285.2 310.1 292.7 304.7 300.2 299.3 292.7 304.7 285.2 295.9 282.3 290.5 274.9 281.7 277.7 287.1 270.2 295.9 273.1" stroke="#62d3d0"/><path d="M295.9 273.1 287.1 276.0 295.9 278.8 301.3 271.3 306.8 263.8 301.3 256.4 292.5 253.5 298.0 261.0 303.4 268.5 294.6 271.3 303.4 274.2" stroke="#62d3d3"/><path d="M303.4 274.2 303.4 283.4 303.4 292.7 298.0 300.2 298.0 309.4 306.8 306.6 306.8 315.8 301.3 308.3 301.3 317.6 292.5 314.7 301.3 311.9" stroke="#61d1d4"/><path d="M301.3 311.9 292.5 314.7 301.3 311.9 295.9 319.3 287.1 316.5 295.9 319.3 301.3 311.9 295.9 319.3 304.7 322.2 304.7 331.5 310.1 324.0" stroke="#5fced4"/><path d="M310.1 324.0 318.9 321.1 310.1 318.3 310.1 327.5 301.3 330.4 292.5 327.5 301.3 330.4 301.3 339.6 295.9 332.1 295.9 322.9 301.3 315.4" stroke="#5ecbd4"/><path d="M301.3 315.4 295.9 307.9 304.7 310.8 304.7 301.5 295.9 304.4 295.9 295.1 295.9 304.4 301.3 311.9 310.1 314.7 315.6 322.2 324.4 319.3" stroke="#5cc7d3"/><path d="M324.4 319.3 324.4 328.6 324.4 337.8 333.2 335.0 338.6 327.5 338.6 336.8 333.2 329.3 338.6 321.8 344.0 329.3 344.0 338.5 344.0 329.3" stroke="#5bc4d3"/><path d="M344.0 329.3 349.5 336.8 349.5 346.0 349.5 355.3 349.5 346.0 340.7 343.1 335.2 335.7 344.0 332.8 335.2 335.7 329.8 343.1 329.8 333.9" stroke="#59c1d3"/><path d="M329.8 333.9 335.2 341.4 329.8 333.9 324.4 326.4 315.6 329.3 315.6 338.5 306.8 341.4 315.6 344.2 310.1 336.8 304.7 329.3 313.5 332.1" stroke="#57bed3"/><path d="M313.5 332.1 318.9 324.6 318.9 315.4 310.1 318.3 315.6 310.8 306.8 313.6 306.8 304.4 301.3 296.9 292.5 299.8 287.1 292.3 287.1 283.0" stroke="#56bbd2"/><path d="M287.1 283.0 287.1 273.8 281.7 281.3 272.9 284.1 278.3 291.6 283.7 299.1 292.5 296.2 287.1 288.7 278.3 285.9 269.5 283.0 260.7 280.2" stroke="#54b8d2"/><path d="M260.7 280.2 269.5 283.0 269.5 273.8 278.3 276.6 272.9 284.1 264.1 281.3 255.3 284.1 255.3 293.4 264.1 290.5 264.1 281.3 272.9 284.1" stroke="#53b4d2"/><path d="M272.9 284.1 281.7 281.3 287.1 288.7 287.1 279.5 278.3 276.6 283.7 284.1 274.9 281.3 274.9 272.0 274.9 262.8 283.7 259.9 292.5 262.8" stroke="#51b1d2"/><path d="M292.5 262.8 283.7 265.6 274.9 268.5 280.4 276.0 271.6 273.1 266.1 280.6 260.7 288.1 260.7 297.3 255.3 304.8 249.8 297.3 244.4 304.8" stroke="#50aed2"/><path d="M244.4 304.8 253.2 301.9 247.8 309.4 256.5 312.3 251.1 304.8 256.5 312.3 251.1 304.8 251.1 314.0 259.9 316.9 251.1 314.0 251.1 304.8" stroke="#4eabd2"/><path d="M251.1 304.8 251.1 314.0 242.3 311.2 236.9 318.7 236.9 309.4 231.4 301.9 240.2 304.8 234.8 312.3 240.2 319.8 249.0 322.6 240.2 319.8" stroke="#4da8d1"/><path d="M240.2 319.8 234.8 327.2 243.6 324.4 249.0 316.9 249.0 307.7 257.8 304.8 249.0 301.9 254.5 294.5 259.9 301.9 265.3 294.5 259.9 301.9" stroke="#4ba5d1"/><path d="M259.9 301.9 251.1 304.8 242.3 301.9 233.5 304.8 228.1 297.3 222.6 304.8 217.2 312.3 211.8 304.8 211.8 295.5 206.3 303.0 215.1 300.2" stroke="#49a1d1"/><path d="M215.1 300.2 215.1 290.9 206.3 293.8 200.9 301.3 206.3 293.8 197.5 296.6 192.1 304.1 186.7 311.6 192.1 304.1 200.9 307.0 209.7 304.1" stroke="#489ed1"/><path d="M209.7 304.1 204.3 296.6 209.7 304.1 209.7 313.4 215.1 305.9 206.3 308.7 215.1 305.9 223.9 303.0 229.4 310.5 223.9 318.0 229.4 325.5" stroke="#469bd1"/><path d="M229.4 325.5 220.6 322.6 229.4 319.8 238.2 316.9 229.4 314.0 229.4 304.8 234.8 297.3 240.2 304.8 240.2 295.5 245.7 303.0 251.1 295.5" stroke="#4598d0"/><path d="M251.1 295.5 259.9 292.7 265.3 300.2 274.1 297.3 279.6 289.8 285.0 282.3 285.0 291.6 290.5 299.1 281.7 301.9 272.9 304.8 267.4 297.3" stroke="#4395d0"/><path d="M267.4 297.3 276.2 294.5 285.0 297.3 293.8 300.2 302.6 303.0 293.8 300.2 299.3 292.7 290.5 289.8 290.5 299.1 299.3 301.9 304.7 309.4" stroke="#4292d0"/><path d="M304.7 309.4 299.3 316.9 293.8 309.4 299.3 301.9 290.5 299.1 285.0 291.6 276.2 294.5 281.7 287.0 290.5 289.8 281.7 292.7 290.5 295.5" stroke="#408ed0"/><path d="M290.5 295.5 295.9 288.1 301.3 280.6 295.9 273.1 287.1 270.2 292.5 277.7 298.0 285.2 289.2 288.1 298.0 290.9 298.0 300.2 298.0 309.4" stroke="#3e8bd0"/><path d="M298.0 309.4 292.5 316.9 292.5 326.2 301.3 323.3 301.3 332.5 295.9 325.1 295.9 334.3 287.1 331.5 295.9 328.6 287.1 331.5 295.9 328.6" stroke="#3d88d0"/><path d="M295.9 328.6 290.5 336.1 281.7 333.2 290.5 336.1 295.9 328.6 290.5 336.1 299.3 338.9 299.3 348.2 304.7 340.7 313.5 337.8 304.7 335.0" stroke="#3b85d0"/><path d="M304.7 335.0 304.7 344.2 295.9 347.1 287.1 344.2 295.9 347.1 295.9 356.3 290.5 348.9 290.5 339.6 295.9 332.1 290.5 324.6 299.3 327.5" stroke="#3a82cf"/><path d="M299.3 327.5 299.3 318.3 290.5 321.1 290.5 311.9 290.5 321.1 295.9 328.6 304.7 331.5 310.1 338.9 318.9 336.1 318.9 345.3 318.9 354.6" stroke="#387fcf"/><path d="M318.9 354.6 327.7 351.7 333.2 344.2 333.2 353.5 327.7 346.0 333.2 338.5 338.6 346.0 338.6 355.3 338.6 346.0 344.0 353.5 344.0 362.7" stroke="#377bcf"/><path d="M344.0 362.7 344.0 372.0 344.0 362.7 335.2 359.9 329.8 352.4 338.6 349.5 329.8 352.4 324.4 359.9 324.4 350.6 329.8 358.1 324.4 350.6" stroke="#3578cf"/><path d="M324.4 350.6 318.9 343.1 310.1 346.0 310.1 355.3 301.3 358.1 310.1 361.0 304.7 353.5 299.3 346.0 308.0 348.9 313.5 341.4 313.5 332.1" stroke="#3475cf"/><path d="M313.5 332.1 304.7 335.0 310.1 327.5 301.3 330.4 301.3 321.1 295.9 313.6 287.1 316.5 281.7 309.0 281.7 299.8 281.7 290.5 276.2 298.0" stroke="#3272cf"/><path d="M276.2 298.0 267.4 300.8 272.9 308.3 278.3 315.8 287.1 313.0 281.7 305.5 272.9 302.6 264.1 299.8 255.3 296.9 264.1 299.8 264.1 290.5" stroke="#306fcf"/><path d="M264.1 290.5 272.9 293.4 267.4 300.8 258.6 298.0 249.8 300.8 249.8 310.1 258.6 307.2 258.6 298.0 267.4 300.8 276.2 298.0 281.7 305.5" stroke="#2f6ccf"/><path d="M281.7 305.5 281.7 296.2 272.9 293.4 278.3 300.8 269.5 298.0 269.5 288.7 269.5 279.5 278.3 276.6 287.1 279.5 278.3 282.3 269.5 285.2" stroke="#2d68cf"/><path d="M269.5 285.2 274.9 292.7 266.1 289.8 260.7 297.3 255.3 304.8 255.3 314.0 249.8 321.5 244.4 314.0 239.0 321.5 247.8 318.7 242.3 326.2" stroke="#2c65ce"/><path d="M242.3 326.2 251.1 329.0 245.7 321.5 251.1 329.0 245.7 321.5 245.7 330.8 254.5 333.6 245.7 330.8 245.7 321.5 245.7 330.8 236.9 327.9" stroke="#2a62ce"/><path d="M236.9 327.9 231.4 335.4 231.4 326.2 226.0 318.7 234.8 321.5 229.4 329.0 234.8 336.5 243.6 339.4 234.8 336.5 229.4 344.0 238.2 341.1" stroke="#295fce"/><path d="M238.2 341.1 243.6 333.6 243.6 324.4 252.4 321.5 243.6 318.7 249.0 311.2 254.5 318.7 259.9 311.2 254.5 318.7 245.7 321.5 236.9 318.7" stroke="#275cce"/><path d="M236.9 318.7 228.1 321.5 222.6 314.0 217.2 321.5 211.8 329.0 206.3 321.5 206.3 312.3 200.9 319.8 209.7 316.9 209.7 307.7 200.9 310.5" stroke="#2559ce"/><path d="M200.9 310.5 195.5 318.0 200.9 310.5 192.1 313.4 186.7 320.9 181.2 328.3 186.7 320.9 195.5 323.7 204.3 320.9 198.8 313.4 204.3 320.9" stroke="#2455ce"/><path d="M204.3 320.9 204.3 330.1 209.7 322.6 200.9 325.5 209.7 322.6 218.5 319.8 223.9 327.2 218.5 334.7 223.9 342.2 215.1 339.4 223.9 336.5" stroke="#2252ce"/><path d="M223.9 336.5 232.7 333.6 223.9 330.8 223.9 321.5 229.4 314.0 234.8 321.5 234.8 312.3 240.2 319.8 245.7 312.3 254.5 309.4 259.9 316.9" stroke="#214fce"/><path d="M259.9 316.9 268.7 314.0 274.1 306.6 279.6 299.1 279.6 308.3 285.0 315.8 276.2 318.7 267.4 321.5 262.0 314.0 270.8 311.2 279.6 314.0" stroke="#1f4cce"/><path d="M279.6 314.0 288.4 316.9 297.2 319.8 288.4 316.9 293.8 309.4 285.0 306.6 285.0 315.8 293.8 318.7 299.3 326.2 293.8 333.6 288.4 326.2" stroke="#1e49ce"/><path d="M288.4 326.2 293.8 318.7 285.0 315.8 279.6 308.3 270.8 311.2 276.2 303.7 285.0 306.6 276.2 309.4 285.0 312.3 290.5 304.8 295.9 297.3" stroke="#1c46ce"/><path d="M295.9 297.3 290.5 289.8 281.7 287.0 287.1 294.5 292.5 301.9 283.7 304.8 292.5 307.7 292.5 316.9 292.5 326.2 287.1 333.6 287.1 342.9" stroke="#1b42ce"/><path d="M287.1 342.9 295.9 340.0 295.9 349.3 290.5 341.8 290.5 351.0 281.7 348.2 290.5 345.3 281.7 348.2 290.5 345.3 285.0 352.8 276.2 350.0" stroke="#193fce"/><path d="M276.2 350.0 285.0 352.8 290.5 345.3 285.0 352.8 293.8 355.7 293.8 364.9 299.3 357.4 308.0 354.6 299.3 351.7 299.3 361.0 290.5 363.8" stroke="#173cce"/><path d="M290.5 363.8 281.7 361.0 290.5 363.8 290.5 373.1 285.0 365.6 285.0 356.3 290.5 348.9 285.0 341.4 293.8 344.2 293.8 335.0 285.0 337.8" stroke="#1639ce"/><path d="M285.0 337.8 285.0 328.6 285.0 337.8 290.5 345.3 299.3 348.2 304.7 355.7 313.5 352.8 313.5 362.1 313.5 371.3 322.3 368.5 327.7 361.0" stroke="#1436cd"/><path d="M327.7 361.0 327.7 370.2 322.3 362.7 327.7 355.3 333.2 362.7 333.2 372.0 333.2 362.7 338.6 370.2 338.6 379.5 338.6 388.7 338.6 379.5" stroke="#1333cd"/><path d="M338.6 379.5 329.8 376.6 324.4 369.1 333.2 366.3 324.4 369.1 318.9 376.6 318.9 367.4 324.4 374.8 318.9 367.4 313.5 359.9 304.7 362.7" stroke="#112fcd"/><path d="M304.7 362.7 304.7 372.0 295.9 374.8 304.7 377.7 299.3 370.2 293.8 362.7 302.6 365.6 308.0 358.1 308.0 348.9 299.3 351.7 304.7 344.2" stroke="#102ccd"/><path d="M304.7 344.2 295.9 347.1 295.9 337.8 290.5 330.4 281.7 333.2 276.2 325.7 276.2 316.5 276.2 307.2 270.8 314.7 262.0 317.6 267.4 325.1" stroke="#0e29cd"/><path d="M267.4 325.1 272.9 332.5 281.7 329.7 276.2 322.2 267.4 319.3 258.6 316.5 249.8 313.6 258.6 316.5 258.6 307.2 267.4 310.1 262.0 317.6" stroke="#0c26cd"/><path d="M262.0 317.6 253.2 314.7 244.4 317.6 244.4 326.8 253.2 324.0 253.2 314.7 262.0 317.6 270.8 314.7 276.2 322.2 276.2 313.0 267.4 310.1" stroke="#0b23cd"/><path d="M267.4 310.1 272.9 317.6 264.1 314.7 264.1 305.5 264.1 296.2 272.9 293.4 281.7 296.2 272.9 299.1 264.1 301.9 269.5 309.4 260.7 306.6" stroke="#0920cd"/><path d="M260.7 306.6 255.3 314.0 249.8 321.5 249.8 330.8 244.4 338.3 239.0 330.8 233.5 338.3 242.3 335.4 236.9 342.9 245.7 345.7 240.2 338.3" stroke="#081ccd"/><path d="M240.2 338.3 245.7 345.7 240.2 338.3 240.2 347.5 249.0 350.4 240.2 347.5 240.2 338.3 240.2 347.5 231.4 344.7 226.0 352.1 226.0 342.9" stroke="#0619cd"/><path d="M226.0 342.9 220.6 335.4 229.4 338.3 223.9 345.7 229.4 353.2 238.2 356.1 229.4 353.2 223.9 360.7 232.7 357.9 238.2 350.4 238.2 341.1" stroke="#0516cd"/><path d="M238.2 341.1 247.0 338.3 238.2 335.4 243.6 327.9 249.0 335.4 254.5 327.9 249.0 335.4 240.2 338.3 231.4 335.4 222.6 338.3 217.2 330.8" stroke="#0413cd"/><path d="M217.2 330.8 211.8 338.3 206.3 345.7 200.9 338.3 200.9 329.0 195.5 336.5 204.3 333.6 204.3 324.4 195.5 327.2 190.0 334.7 195.5 327.2" stroke="#0310cd"/><path d="M195.5 327.2 186.7 330.1 181.2 337.6 175.8 345.1 181.2 337.6 190.0 340.4 198.8 337.6 193.4 330.1 198.8 337.6 198.8 346.8 204.3 339.4" stroke="#020dcd"/><path d="M204.3 339.4 195.5 342.2 204.3 339.4 213.1 336.5 218.5 344.0 213.1 351.5 218.5 358.9 209.7 356.1 218.5 353.2 227.3 350.4 218.5 347.5" stroke="#0109cd"/><path d="M218.5 347.5 218.5 338.3 223.9 330.8 229.4 338.3 229.4 329.0 234.8 336.5 240.2 329.0 249.0 326.2 254.5 333.6 263.3 330.8 268.7 323.3" stroke="#0106cd"/><path d="M268.7 323.3 274.1 315.8 274.1 325.1 279.6 332.5 270.8 335.4 262.0 338.3 256.5 330.8 265.3 327.9 274.1 330.8 282.9 333.6 291.7 336.5" stroke="#0003cd"/><path d="M291.7 336.5 282.9 333.6 288.4 326.2 279.6 323.3 279.6 332.5 288.4 335.4 293.8 342.9 288.4 350.4 282.9 342.9 288.4 335.4 279.6 332.5" stroke="#0000cd"/><path d="M279.6 332.5 274.1 325.1 265.3 327.9 270.8 320.4 279.6 323.3 270.8 326.2 279.6 329.0 285.0 321.5 290.5 314.0 285.0 306.6 276.2 303.7" stroke="#0200cd"/><path d="M276.2 303.7 281.7 311.2 287.1 318.7 278.3 321.5 287.1 324.4 287.1 333.6 287.1 342.9 281.7 350.4 281.7 359.6 290.5 356.8 290.5 366.0" stroke="#0400cd"/><path d="M290.5 366.0 285.0 358.5 285.0 367.8 276.2 364.9 285.0 362.1 276.2 364.9 285.0 362.1 279.6 369.5 270.8 366.7 279.6 369.5 285.0 362.1" stroke="#0700cd"/><path d="M285.0 362.1 279.6 369.5 288.4 372.4 288.4 381.7 293.8 374.2 302.6 371.3 293.8 368.5 293.8 377.7 285.0 380.6 276.2 377.7 285.0 380.6" stroke="#0a00cd"/><path d="M285.0 380.6 285.0 389.8 279.6 382.3 279.6 373.1 285.0 365.6 279.6 358.1 288.4 361.0 288.4 351.7 279.6 354.6 279.6 345.3 279.6 354.6" stroke="#0d00cd"/><path d="M279.6 354.6 285.0 362.1 293.8 364.9 299.3 372.4 308.0 369.5 308.0 378.8 308.0 388.0 316.8 385.2 322.3 377.7 322.3 387.0 316.8 379.5" stroke="#1000cd"/><path d="M316.8 379.5 322.3 372.0 327.7 379.5 327.7 388.7 327.7 379.5 333.2 387.0 333.2 396.2 333.2 405.5 333.2 396.2 324.4 393.3 318.9 385.9" stroke="#1300cd"/><path d="M318.9 385.9 327.7 383.0 318.9 385.9 313.5 393.3 313.5 384.1 318.9 391.6 313.5 384.1 308.0 376.6 299.3 379.5 299.3 388.7 290.5 391.6" stroke="#1601cd"/><path d="M290.5 391.6 299.3 394.4 293.8 387.0 288.4 379.5 297.2 382.3 302.6 374.8 302.6 365.6 293.8 368.5 299.3 361.0 290.5 363.8 290.5 354.6" stroke="#1901cd"/><path d="M290.5 354.6 285.0 347.1 276.2 350.0 270.8 342.5 270.8 333.2 270.8 324.0 265.3 331.5 256.5 334.3 262.0 341.8 267.4 349.3 276.2 346.4" stroke="#1c01cd"/><path d="M276.2 346.4 270.8 338.9 262.0 336.1 253.2 333.2 244.4 330.4 253.2 333.2 253.2 324.0 262.0 326.8 256.5 334.3 247.8 331.5 239.0 334.3" stroke="#1f02cd"/><path d="M239.0 334.3 239.0 343.6 247.8 340.7 247.8 331.5 256.5 334.3 265.3 331.5 270.8 338.9 270.8 329.7 262.0 326.8 267.4 334.3 258.6 331.5" stroke="#2202cd"/><path d="M258.6 331.5 258.6 322.2 258.6 313.0 267.4 310.1 276.2 313.0 267.4 315.8 258.6 318.7 264.1 326.2 255.3 323.3 249.8 330.8 244.4 338.3" stroke="#2502cd"/><path d="M244.4 338.3 244.4 347.5 239.0 355.0 233.5 347.5 228.1 355.0 236.9 352.1 231.4 359.6 240.2 362.5 234.8 355.0 240.2 362.5 234.8 355.0" stroke="#2803cd"/><path d="M234.8 355.0 234.8 364.2 243.6 367.1 234.8 364.2 234.8 355.0 234.8 364.2 226.0 361.4 220.6 368.9 220.6 359.6 215.1 352.1 223.9 355.0" stroke="#2b03cd"/><path d="M223.9 355.0 218.5 362.5 223.9 370.0 232.7 372.8 223.9 370.0 218.5 377.4 227.3 374.6 232.7 367.1 232.7 357.9 241.5 355.0 232.7 352.1" stroke="#2d04cd"/><path d="M232.7 352.1 238.2 344.7 243.6 352.1 249.0 344.7 243.6 352.1 234.8 355.0 226.0 352.1 217.2 355.0 211.8 347.5 206.3 355.0 200.9 362.5" stroke="#3004cd"/><path d="M200.9 362.5 195.5 355.0 195.5 345.7 190.0 353.2 198.8 350.4 198.8 341.1 190.0 344.0 184.6 351.5 190.0 344.0 181.2 346.8 175.8 354.3" stroke="#3305cd"/><path d="M175.8 354.3 170.3 361.8 175.8 354.3 184.6 357.2 193.4 354.3 187.9 346.8 193.4 354.3 193.4 363.6 198.8 356.1 190.0 358.9 198.8 356.1" stroke="#3605cd"/><path d="M198.8 356.1 207.6 353.2 213.1 360.7 207.6 368.2 213.1 375.7 204.3 372.8 213.1 370.0 221.8 367.1 213.1 364.2 213.1 355.0 218.5 347.5" stroke="#3906cd"/><path d="M218.5 347.5 223.9 355.0 223.9 345.7 229.4 353.2 234.8 345.7 243.6 342.9 249.0 350.4 257.8 347.5 263.3 340.0 268.7 332.5 268.7 341.8" stroke="#3c07cd"/><path d="M268.7 341.8 274.1 349.3 265.3 352.1 256.5 355.0 251.1 347.5 259.9 344.7 268.7 347.5 277.5 350.4 286.3 353.2 277.5 350.4 282.9 342.9" stroke="#3f08cd"/><path d="M282.9 342.9 274.1 340.0 274.1 349.3 282.9 352.1 288.4 359.6 282.9 367.1 277.5 359.6 282.9 352.1 274.1 349.3 268.7 341.8 259.9 344.7" stroke="#4208cd"/><path d="M259.9 344.7 265.3 337.2 274.1 340.0 265.3 342.9 274.1 345.7 279.6 338.3 285.0 330.8 279.6 323.3 270.8 320.4 276.2 327.9 281.7 335.4" stroke="#4509cd"/><path d="M281.7 335.4 272.9 338.3 281.7 341.1 281.7 350.4 281.7 359.6 276.2 367.1 276.2 376.4 285.0 373.5 285.0 382.7 279.6 375.3 279.6 384.5" stroke="#480acd"/><path d="M279.6 384.5 270.8 381.7 279.6 378.8 270.8 381.7 279.6 378.8 274.1 386.3 265.3 383.4 274.1 386.3 279.6 378.8 274.1 386.3 282.9 389.1" stroke="#4b0bcd"/><path d="M282.9 389.1 282.9 398.4 288.4 390.9 297.2 388.0 288.4 385.2 288.4 394.4 279.6 397.3 270.8 394.4 279.6 397.3 279.6 406.5 274.1 399.1" stroke="#4e0bcd"/><path d="M274.1 399.1 274.1 389.8 279.6 382.3 274.1 374.8 282.9 377.7 282.9 368.5 274.1 371.3 274.1 362.1 274.1 371.3 279.6 378.8 288.4 381.7" stroke="#510ccd"/><path d="M288.4 381.7 293.8 389.1 302.6 386.3 302.6 395.5 302.6 404.8 311.4 401.9 316.8 394.4 316.8 403.7 311.4 396.2 316.8 388.7 322.3 396.2" stroke="#540dcd"/><path d="M322.3 396.2 322.3 405.5 322.3 396.2 327.7 403.7 327.7 412.9 327.7 422.2 327.7 412.9 318.9 410.1 313.5 402.6 322.3 399.7 313.5 402.6" stroke="#570ecd"/><path d="M313.5 402.6 308.0 410.1 308.0 400.8 313.5 408.3 308.0 400.8 302.6 393.3 293.8 396.2 293.8 405.5 285.0 408.3 293.8 411.2 288.4 403.7" stroke="#5a0fcd"/><path d="M288.4 403.7 282.9 396.2 291.7 399.1 297.2 391.6 297.2 382.3 288.4 385.2 293.8 377.7 285.0 380.6 285.0 371.3 279.6 363.8 270.8 366.7" stroke="#5d0fcd"/><path d="M270.8 366.7 265.3 359.2 265.3 350.0 265.3 340.7 259.9 348.2 251.1 351.0 256.5 358.5 262.0 366.0 270.8 363.2 265.3 355.7 256.5 352.8" stroke="#6010cd"/><path d="M256.5 352.8 247.8 350.0 239.0 347.1 247.8 350.0 247.8 340.7 256.5 343.6 251.1 351.0 242.3 348.2 233.5 351.0 233.5 360.3 242.3 357.4" stroke="#6311cd"/><path d="M242.3 357.4 242.3 348.2 251.1 351.0 259.9 348.2 265.3 355.7 265.3 346.4 256.5 343.6 262.0 351.0 253.2 348.2 253.2 338.9 253.2 329.7" stroke="#6612cd"/><path d="M253.2 329.7 262.0 326.8 270.8 329.7 262.0 332.5 253.2 335.4 258.6 342.9 249.8 340.0 244.4 347.5 239.0 355.0 239.0 364.2 233.5 371.7" stroke="#6912cd"/><path d="M233.5 371.7 228.1 364.2 222.6 371.7 231.4 368.9 226.0 376.4 234.8 379.2 229.4 371.7 234.8 379.2 229.4 371.7 229.4 381.0 238.2 383.8" stroke="#6c13ce"/><path d="M238.2 383.8 229.4 381.0 229.4 371.7 229.4 381.0 220.6 378.1 215.1 385.6 215.1 376.4 209.7 368.9 218.5 371.7 213.1 379.2 218.5 386.7" stroke="#6f14ce"/><path d="M218.5 386.7 227.3 389.6 218.5 386.7 213.1 394.2 221.8 391.3 227.3 383.8 227.3 374.6 236.1 371.7 227.3 368.9 232.7 361.4 238.2 368.9" stroke="#7215ce"/><path d="M238.2 368.9 243.6 361.4 238.2 368.9 229.4 371.7 220.6 368.9 211.8 371.7 206.3 364.2 200.9 371.7 195.5 379.2 190.0 371.7 190.0 362.5" stroke="#7516ce"/><path d="M190.0 362.5 184.6 370.0 193.4 367.1 193.4 357.9 184.6 360.7 179.1 368.2 184.6 360.7 175.8 363.6 170.3 371.1 164.9 378.5 170.3 371.1" stroke="#7816ce"/><path d="M170.3 371.1 179.1 373.9 187.9 371.1 182.5 363.6 187.9 371.1 187.9 380.3 193.4 372.8 184.6 375.7 193.4 372.8 202.2 370.0 207.6 377.4" stroke="#7a17ce"/><path d="M207.6 377.4 202.2 384.9 207.6 392.4 198.8 389.6 207.6 386.7 216.4 383.8 207.6 381.0 207.6 371.7 213.1 364.2 218.5 371.7 218.5 362.5" stroke="#7d18ce"/><path d="M218.5 362.5 223.9 370.0 229.4 362.5 238.2 359.6 243.6 367.1 252.4 364.2 257.8 356.8 263.3 349.3 263.3 358.5 268.7 366.0 259.9 368.9" stroke="#8019ce"/><path d="M259.9 368.9 251.1 371.7 245.7 364.2 254.5 361.4 263.3 364.2 272.1 367.1 280.9 370.0 272.1 367.1 277.5 359.6 268.7 356.8 268.7 366.0" stroke="#8319ce"/><path d="M268.7 366.0 277.5 368.9 282.9 376.4 277.5 383.8 272.1 376.4 277.5 368.9 268.7 366.0 263.3 358.5 254.5 361.4 259.9 353.9 268.7 356.8" stroke="#861ace"/><path d="M268.7 356.8 259.9 359.6 268.7 362.5 274.1 355.0 279.6 347.5 274.1 340.0 265.3 337.2 270.8 344.7 276.2 352.1 267.4 355.0 276.2 357.9" stroke="#891bce"/><path d="M276.2 357.9 276.2 367.1 276.2 376.4 270.8 383.8 270.8 393.1 279.6 390.2 279.6 399.5 274.1 392.0 274.1 401.2 265.3 398.4 274.1 395.5" stroke="#8c1cce"/><path d="M274.1 395.5 265.3 398.4 274.1 395.5 268.7 403.0 259.9 400.2 268.7 403.0 274.1 395.5 268.7 403.0 277.5 405.9 277.5 415.1 282.9 407.6" stroke="#8f1dce"/><path d="M282.9 407.6 291.7 404.8 282.9 401.9 282.9 411.2 274.1 414.0 265.3 411.2 274.1 414.0 274.1 423.3 268.7 415.8 268.7 406.5 274.1 399.1" stroke="#921dce"/><path d="M274.1 399.1 268.7 391.6 277.5 394.4 277.5 385.2 268.7 388.0 268.7 378.8 268.7 388.0 274.1 395.5 282.9 398.4 288.4 405.9 297.2 403.0" stroke="#951ece"/><path d="M297.2 403.0 297.2 412.3 297.2 421.5 306.0 418.7 311.4 411.2 311.4 420.4 306.0 412.9 311.4 405.5 316.8 412.9 316.8 422.2 316.8 412.9" stroke="#981fce"/><path d="M316.8 412.9 322.3 420.4 322.3 429.7 322.3 438.9 322.3 429.7 313.5 426.8 308.0 419.3 316.8 416.5 308.0 419.3 302.6 426.8 302.6 417.6" stroke="#9b20ce"/><path d="M302.6 417.6 308.0 425.0 302.6 417.6 297.2 410.1 288.4 412.9 288.4 422.2 279.6 425.0 288.4 427.9 282.9 420.4 277.5 412.9 286.3 415.8" stroke="#9e20ce"/><path d="M286.3 415.8 291.7 408.3 291.7 399.1 282.9 401.9 288.4 394.4 279.6 397.3 279.6 388.0 274.1 380.6 265.3 383.4 259.9 375.9 259.9 366.7" stroke="#a121ce"/><path d="M259.9 366.7 259.9 357.4 254.5 364.9 245.7 367.8 251.1 375.3 256.5 382.7 265.3 379.9 259.9 372.4 251.1 369.5 242.3 366.7 233.5 363.8" stroke="#a422ce"/><path d="M233.5 363.8 242.3 366.7 242.3 357.4 251.1 360.3 245.7 367.8 236.9 364.9 228.1 367.8 228.1 377.0 236.9 374.2 236.9 364.9 245.7 367.8" stroke="#a723ce"/><path d="M245.7 367.8 254.5 364.9 259.9 372.4 259.9 363.2 251.1 360.3 256.5 367.8 247.8 364.9 247.8 355.7 247.8 346.4 256.5 343.6 265.3 346.4" stroke="#aa24ce"/><path d="M265.3 346.4 256.5 349.3 247.8 352.1 253.2 359.6 244.4 356.8 239.0 364.2 233.5 371.7 233.5 381.0 228.1 388.5 222.6 381.0 217.2 388.5" stroke="#ad24ce"/><path d="M217.2 388.5 226.0 385.6 220.6 393.1 229.4 395.9 223.9 388.5 229.4 395.9 223.9 388.5 223.9 397.7 232.7 400.6 223.9 397.7 223.9 388.5" stroke="#b025ce"/><path d="M223.9 388.5 223.9 397.7 215.1 394.9 209.7 402.3 209.7 393.1 204.3 385.6 213.1 388.5 207.6 395.9 213.1 403.4 221.8 406.3 213.1 403.4" stroke="#b326ce"/><path d="M213.1 403.4 207.6 410.9 216.4 408.1 221.8 400.6 221.8 391.3 230.6 388.5 221.8 385.6 227.3 378.1 232.7 385.6 238.2 378.1 232.7 385.6" stroke="#b627ce"/><path d="M232.7 385.6 223.9 388.5 215.1 385.6 206.3 388.5 200.9 381.0 195.5 388.5 190.0 395.9 184.6 388.5 184.6 379.2 179.1 386.7 187.9 383.8" stroke="#b927cf"/><path d="M187.9 383.8 187.9 374.6 179.1 377.4 173.7 384.9 179.1 377.4 170.3 380.3 164.9 387.8 159.5 395.3 164.9 387.8 173.7 390.6 182.5 387.8" stroke="#bc28cf"/><path d="M182.5 387.8 177.1 380.3 182.5 387.8 182.5 397.0 187.9 389.6 179.1 392.4 187.9 389.6 196.7 386.7 202.2 394.2 196.7 401.7 202.2 409.1" stroke="#bf29cf"/><path d="M202.2 409.1 193.4 406.3 202.2 403.4 211.0 400.6 202.2 397.7 202.2 388.5 207.6 381.0 213.1 388.5 213.1 379.2 218.5 386.7 223.9 379.2" stroke="#c22acf"/><path d="M223.9 379.2 232.7 376.4 238.2 383.8 247.0 381.0 252.4 373.5 257.8 366.0 257.8 375.3 263.3 382.7 254.5 385.6 245.7 388.5 240.2 381.0" stroke="#c42ace"/><path d="M240.2 381.0 249.0 378.1 257.8 381.0 266.6 383.8 275.4 386.7 266.6 383.8 272.1 376.4 263.3 373.5 263.3 382.7 272.1 385.6 277.5 393.1" stroke="#c42acb"/><path d="M277.5 393.1 272.1 400.6 266.6 393.1 272.1 385.6 263.3 382.7 257.8 375.3 249.0 378.1 254.5 370.6 263.3 373.5 254.5 376.4 263.3 379.2" stroke="#c42ac8"/><path d="M263.3 379.2 268.7 371.7 274.1 364.2 268.7 356.8 259.9 353.9 265.3 361.4 270.8 368.9 262.0 371.7 270.8 374.6 270.8 383.8 270.8 393.1" stroke="#c42ac5"/><path d="M270.8 393.1 265.3 400.6 265.3 409.8 274.1 407.0 274.1 416.2 268.7 408.7 268.7 418.0 259.9 415.1 268.7 412.3 259.9 415.1 268.7 412.3" stroke="#c42ac2"/><path d="M268.7 412.3 263.3 419.7 254.5 416.9 263.3 419.7 268.7 412.3 263.3 419.7 272.1 422.6 272.1 431.9 277.5 424.4 286.3 421.5 277.5 418.7" stroke="#c42abf"/><path d="M277.5 418.7 277.5 427.9 268.7 430.8 259.9 427.9 268.7 430.8 268.7 440.0 263.3 432.5 263.3 423.3 268.7 415.8 263.3 408.3 272.1 411.2" stroke="#c42abc"/><path d="M272.1 411.2 272.1 401.9 263.3 404.8 263.3 395.5 263.3 404.8 268.7 412.3 277.5 415.1 282.9 422.6 291.7 419.7 291.7 429.0 291.7 438.2" stroke="#c42ab9"/><path d="M291.7 438.2 300.5 435.4 306.0 427.9 306.0 437.2 300.5 429.7 306.0 422.2 311.4 429.7 311.4 438.9 311.4 429.7 316.8 437.2 316.8 446.4" stroke="#c42ab6"/><path d="M316.8 446.4 316.8 455.7 316.8 446.4 308.0 443.5 302.6 436.1 311.4 433.2 302.6 436.1 297.2 443.5 297.2 434.3 302.6 441.8 297.2 434.3" stroke="#c42ab3"/><path d="M297.2 434.3 291.7 426.8 282.9 429.7 282.9 438.9 274.1 441.8 282.9 444.6 277.5 437.2 272.1 429.7 280.9 432.5 286.3 425.0 286.3 415.8" stroke="#c42ab0"/><path d="M286.3 415.8 277.5 418.7 282.9 411.2 274.1 414.0 274.1 404.8 268.7 397.3 259.9 400.2 254.5 392.7 254.5 383.4 254.5 374.2 249.0 381.7" stroke="#c42aad"/><path d="M249.0 381.7 240.2 384.5 245.7 392.0 251.1 399.5 259.9 396.6 254.5 389.1 245.7 386.3 236.9 383.4 228.1 380.6 236.9 383.4 236.9 374.2" stroke="#c42aaa"/><path d="M236.9 374.2 245.7 377.0 240.2 384.5 231.4 381.7 222.6 384.5 222.6 393.8 231.4 390.9 231.4 381.7 240.2 384.5 249.0 381.7 254.5 389.1" stroke="#c42aa7"/><path d="M254.5 389.1 254.5 379.9 245.7 377.0 251.1 384.5 242.3 381.7 242.3 372.4 242.3 363.2 251.1 360.3 259.9 363.2 251.1 366.0 242.3 368.9" stroke="#c42aa4"/><path d="M242.3 368.9 247.8 376.4 239.0 373.5 233.5 381.0 228.1 388.5 228.1 397.7 222.6 405.2 217.2 397.7 211.8 405.2 220.6 402.3 215.1 409.8" stroke="#c42aa1"/><path d="M215.1 409.8 223.9 412.7 218.5 405.2 223.9 412.7 218.5 405.2 218.5 414.4 227.3 417.3 218.5 414.4 218.5 405.2 218.5 414.4 209.7 411.6" stroke="#c42a9e"/></g>
<circle cx="398.4" cy="213.9" r="1.8" fill="#f04a2e"/>
</svg>
</div>
<div class="a" id="bt"></div>
<div class="a t b" style="left:5px;top:507.7px;font-size:8.45px;-webkit-text-stroke:0.2px #141414">Ansicht wählen:</div>
<div class="a" style="left:99.6px;top:508.8px;width:8px;height:8px;background:#fff;border-radius:1.5px;box-shadow:0 0 0 0.5px #c4c8d2"></div>
<div class="a t" style="left:111px;top:507.3px;font-size:8.36px">Verlauf anzeigen (Pfeile)</div>
<div class="a" style="left:244px;top:508.9px;width:8.6px;height:8.4px;background:#4b92ee;border-radius:1.5px"><svg width="9" height="9" style="position:absolute;left:0;top:0"><path d="M2 4.6 L3.7 6.4 L6.8 2.2" stroke="#fff" stroke-width="1.1" fill="none"/></svg></div>
<div class="a t" style="left:255.9px;top:507.8px">schwarz</div>
<div class="a t" style="left:311.2px;top:504.2px;font-size:8.9px;-webkit-text-stroke:0.25px #141414">Zoomstufe:</div>
<div class="a" style="left:307.4px;top:515.4px;width:491px;height:6.8px;background:#d0d0d0;border-top:0.5px solid #b0b0b0"></div>
<div class="thumb" style="left:308.8px;top:516px;width:18px;height:5.8px;background:#d8dce8"><i></i></div>
<div class="a" id="ft"><div class="a" style="right:5.3px;top:5px;font-size:6.44px;color:#fff;-webkit-text-stroke:0.2px #fff">St. Günster &amp; J. Wörler | 2018 | Universität Würzburg | www.dmuw.de</div></div>
</body></html>
